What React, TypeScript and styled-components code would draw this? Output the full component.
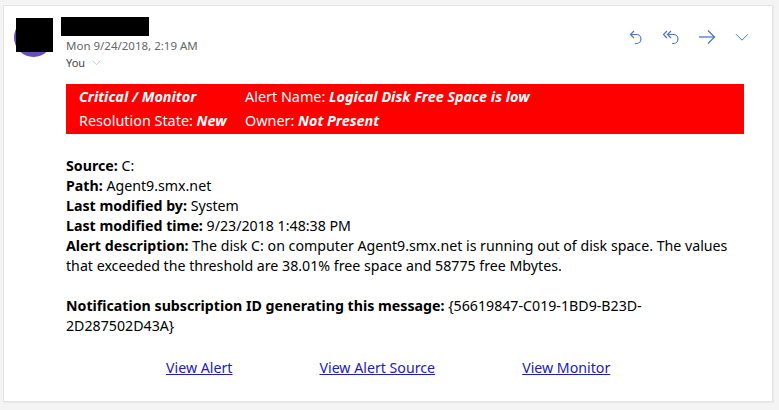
import React from 'react'
import styled, { createGlobalStyle } from 'styled-components'

const GlobalStyle = createGlobalStyle`
	html, body {
		margin: 0;
		padding: 0;
		background: #f4f4f4;
	}
	body {
		font-family: "Noto Sans", "Open Sans", "Liberation Sans", sans-serif;
	}
`;

const Page = styled.div`
	padding: 5px 6px 6px 3px;
`;

/** White message card */
const Card = styled.div`
	background: #fff;
	border: 1px solid #e3e3e3;
	box-shadow: 1px 1px 1px rgba(0,0,0,0.04);
	height: 397px;
	box-sizing: border-box;
	padding: 11px 0 0 10px;
`;

const Header = styled.div`
	display: grid;
	grid-template-columns: 47px 1fr auto;
	align-items: start;
`;

const Avatar = styled.div`
	position: relative;
	width: 39px;
	height: 39px;
	margin-top: 1px;
	border-radius: 50%;
	background: #6a4cbc;
`;

/* redaction block laid over the avatar */
const AvatarMask = styled.div`
	position: absolute;
	left: 2px;
	top: 0;
	width: 37px;
	height: 34px;
	background: #000;
`;

const Meta = styled.div`
	display: flex;
	flex-direction: column;
	font-size: 11.5px;
	color: #666;
`;

const NameMask = styled.div`
	width: 88px;
	height: 19px;
	background: #000;
`;

const DateLine = styled.div`
	margin: 1px 0 0 5px;
	line-height: 17px;
	color: #666;
`;

const ToLine = styled.div`
	display: flex;
	align-items: center;
	gap: 7px;
	margin-left: 5px;
	line-height: 18px;
	font-size: 11px;
	color: #444;
`;

const Actions = styled.div`
	display: flex;
	align-items: center;
	gap: 18px;
	margin: 12px 22px 0 0;
	color: #4a78c6;
`;

const IconBox = styled.span`
	display: flex;
	width: ${({ w }: { w: number }) => w}px;
	justify-content: center;
`;

const MessageBody = styled.div`
	width: 678px;
	margin: 12px 0 0 52px;
	font-size: 14.2px;
	color: #000;
`;

const Banner = styled.table`
	width: 100%;
	background: #ff0000;
	color: #fff;
	border-collapse: collapse;
	font-size: 14.4px;
	td {
		padding: 0 0 0 13px;
		height: 24px;
		line-height: 24px;
		white-space: nowrap;
	}
	td:first-child { width: 153px; }
	tr:first-child td { padding-top: 1px; }
	tr:last-child td { padding-bottom: 1px; }
`;

const Strong = styled.b`
	font-style: italic;
	font-weight: 700;
`;

const Fields = styled.div`
	margin-top: 22px;
	line-height: 20px;
`;

const Label = styled.b`
	font-weight: 700;
`;

const Spacer = styled.div`
	height: 20px;
`;

const Links = styled.div`
	display: flex;
	gap: 87px;
	margin: 22px 0 0 100px;
`;

const Link = styled.a`
	color: #2020b8;
	text-decoration: underline;
`;

const ReplyIcon = () => (
	<svg width="14" height="16" viewBox="0 0 14 16" fill="none" stroke="currentColor" strokeWidth="1.2">
		<path d="M5 2 L1.5 5.5 L5 9" />
		<path d="M1.5 5.5 H7.5 a4.5 4.5 0 0 1 0 9 H6" />
	</svg>
);

const ReplyAllIcon = () => (
	<svg width="18" height="16" viewBox="0 0 18 16" fill="none" stroke="currentColor" strokeWidth="1.2">
		<path d="M5 2 L1.5 5.5 L5 9" />
		<path d="M9 2 L5.5 5.5 L9 9" />
		<path d="M5.5 5.5 H11.5 a4.5 4.5 0 0 1 0 9 H10" />
	</svg>
);

const ForwardIcon = () => (
	<svg width="18" height="16" viewBox="0 0 18 16" fill="none" stroke="currentColor" strokeWidth="1.3">
		<path d="M1 8 H16.5" />
		<path d="M10 1.5 L16.5 8 L10 14.5" />
	</svg>
);

const ChevronIcon = ({ size = 14 }: { size?: number }) => (
	<svg width={size} height={size * 0.6} viewBox="0 0 14 8" fill="none" stroke="currentColor" strokeWidth="1">
		<path d="M1 1 L7 7 L13 1" />
	</svg>
);

const fields: [string, string][] = [
	["Source:", "C:"],
	["Path:", "Agent9.smx.net"],
	["Last modified by:", "System"],
	["Last modified time:", "9/23/2018 1:48:38 PM"],
	["Alert description:", "The disk C: on computer Agent9.smx.net is running out of disk space. The values that exceeded the threshold are 38.01% free space and 58775 free Mbytes."],
];

export default function App() {
	return (
		<Page>
			<GlobalStyle />
			<Card>
				<Header>
					<Avatar><AvatarMask /></Avatar>
					<Meta>
						<NameMask />
						<DateLine>Mon 9/24/2018, 2:19 AM</DateLine>
						<ToLine>You <span style={{ color: '#aaa', display: 'flex' }}><ChevronIcon size={9} /></span></ToLine>
					</Meta>
					<Actions>
						<IconBox w={16}><ReplyIcon /></IconBox>
						<IconBox w={18}><ReplyAllIcon /></IconBox>
						<IconBox w={18}><ForwardIcon /></IconBox>
						<IconBox w={16}><ChevronIcon /></IconBox>
					</Actions>
				</Header>
				<MessageBody>
					<Banner>
						<tbody>
							<tr>
								<td><Strong>Critical / Monitor</Strong></td>
								<td>Alert Name: <Strong>Logical Disk Free Space is low</Strong></td>
							</tr>
							<tr>
								<td>Resolution State: <Strong>New</Strong></td>
								<td>Owner: <Strong>Not Present</Strong></td>
							</tr>
						</tbody>
					</Banner>
					<Fields>
						{fields.map(([k, v]) => (
							<div key={k}><Label>{k}</Label> {v}</div>
						))}
						<Spacer />
						<div><Label>Notification subscription ID generating this message:</Label> {'{56619847-C019-1BD9-B23D-'}<br />{'2D287502D43A}'}</div>
					</Fields>
					<Links>
						<Link href="#">View Alert</Link>
						<Link href="#">View Alert Source</Link>
						<Link href="#">View Monitor</Link>
					</Links>
				</MessageBody>
			</Card>
		</Page>
	);
}
